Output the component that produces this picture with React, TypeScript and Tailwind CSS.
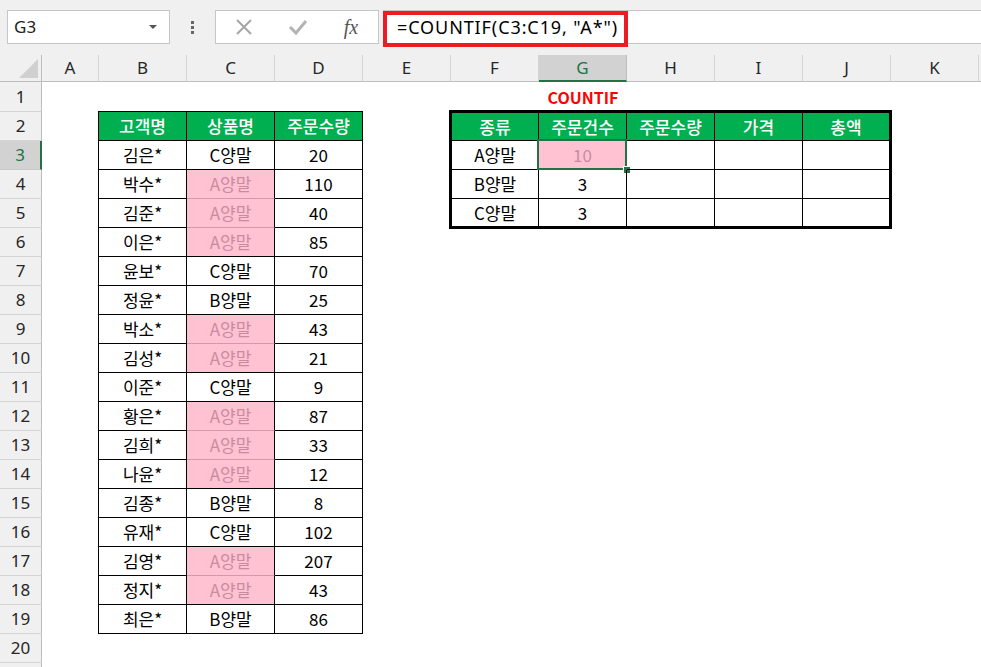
import React from 'react';

interface OrderRow {
    name: string;
    product: string;
    qty: number;
}

const orders: OrderRow[] = [
    { name: '김은*', product: 'C양말', qty: 20 },
    { name: '박수*', product: 'A양말', qty: 110 },
    { name: '김준*', product: 'A양말', qty: 40 },
    { name: '이은*', product: 'A양말', qty: 85 },
    { name: '윤보*', product: 'C양말', qty: 70 },
    { name: '정윤*', product: 'B양말', qty: 25 },
    { name: '박소*', product: 'A양말', qty: 43 },
    { name: '김성*', product: 'A양말', qty: 21 },
    { name: '이준*', product: 'C양말', qty: 9 },
    { name: '황은*', product: 'A양말', qty: 87 },
    { name: '김희*', product: 'A양말', qty: 33 },
    { name: '나윤*', product: 'A양말', qty: 12 },
    { name: '김종*', product: 'B양말', qty: 8 },
    { name: '유재*', product: 'C양말', qty: 102 },
    { name: '김영*', product: 'A양말', qty: 207 },
    { name: '정지*', product: 'A양말', qty: 43 },
    { name: '최은*', product: 'B양말', qty: 86 },
];

// L is only a sliver at the right edge, so its letter stays hidden
const columns = ['A', 'B', 'C', 'D', 'E', 'F', 'G', 'H', 'I', 'J', 'K', ''];
const rowNumbers = Array.from({ length: 21 }, (_, i) => i + 1);

const cellFont = "font-['Noto_Sans_CJK_KR','Noto_Sans',sans-serif]";

const Toolbar: React.FC = () => (
    <div className="h-[55px] bg-[#f0f0f0] flex items-start pt-[10px]">
        {/* name box */}
        <div className="ml-[7px] w-[163px] h-[34px] bg-white border border-[#c6c6c6] flex items-center pl-[6px] pr-[12px]">
            <span className="flex-1 text-[17px] text-[#222] font-['Noto_Sans',sans-serif]">G3</span>
            <span className="w-0 h-0 border-l-[4px] border-r-[4px] border-t-[4px] border-l-transparent border-r-transparent border-t-[#555]" />
        </div>
        <div className="w-[45px] h-[34px] flex flex-col items-center justify-center gap-[2px]">
            <span className="w-[3px] h-[3px] bg-[#666]" />
            <span className="w-[3px] h-[3px] bg-[#666]" />
            <span className="w-[3px] h-[3px] bg-[#666]" />
        </div>
        {/* cancel / enter / fx */}
        <div className="w-[164px] h-[34px] bg-white border border-[#c6c6c6] flex items-center">
            <div className="w-[54px] flex justify-center pl-[2px]">
                <svg width="18" height="18" viewBox="0 0 18 18">
                    <path d="M2 2 L16 16 M16 2 L2 16" stroke="#a6a6a6" strokeWidth="2" fill="none" />
                </svg>
            </div>
            <div className="w-[54px] flex justify-center pl-[2px]">
                <svg width="20" height="16" viewBox="0 0 20 16">
                    <path d="M2 8 L8 14 L18 2" stroke="#b3b3b3" strokeWidth="3" fill="none" />
                </svg>
            </div>
            <div className="w-[54px] flex justify-center">
                <span className="italic text-[20px] text-[#555] font-['Liberation_Serif',serif] leading-none">fx</span>
            </div>
        </div>
        {/* formula input */}
        <div className="ml-[4px] flex-1 h-[34px] bg-white border-y border-l border-[#c6c6c6] relative flex items-center pl-[13px]">
            <span className="text-[18px] tracking-[0.9px] text-black font-['Noto_Sans',sans-serif]">=COUNTIF(C3:C19, "A*")</span>
            <div className="absolute left-[-1px] top-[0px] w-[245px] h-[36px] border-[4px] border-[#ed1c24]" />
        </div>
    </div>
);

const SalesTable: React.FC = () => (
    <div className={`col-start-3 col-end-6 row-start-3 row-end-21 -ml-px -mt-px border-l border-t border-black grid grid-cols-3 grid-rows-[repeat(18,1fr)] ${cellFont}`}>
        {['고객명', '상품명', '주문수량'].map((h) => (
            <div key={h} className="bg-[#00b050] text-white font-medium text-[17px] flex items-center justify-center border-r border-b border-black">
                {h}
            </div>
        ))}
        {orders.map((o, i) => {
            const pink = o.product === 'A양말';
            const nextPink = orders[i + 1]?.product === 'A양말';
            return (
                <React.Fragment key={i}>
                    <div className="text-[17px] text-black flex items-center justify-center border-r border-b border-black">
                        {o.name}
                    </div>
                    <div
                        className={
                            pink
                                ? `text-[17px] text-[#c98c9f] bg-[#ffc2d3] flex items-center justify-center border-r border-b border-r-black ${nextPink ? 'border-b-[#d796aa]' : 'border-b-black'}`
                                : 'text-[17px] text-black flex items-center justify-center border-r border-b border-black'
                        }
                    >
                        {o.product}
                    </div>
                    <div className="text-[17px] text-black flex items-center justify-center border-r border-b border-black">
                        {o.qty}
                    </div>
                </React.Fragment>
            );
        })}
    </div>
);

const SummaryTable: React.FC = () => {
    const heads = ['종류', '주문건수', '주문수량', '가격', '총액'];
    const rows = [
        ['A양말', '10'],
        ['B양말', '3'],
        ['C양말', '3'],
    ];
    return (
        <div className={`col-start-7 col-end-12 row-start-3 row-end-7 -ml-[2px] -mt-[2px] -mr-px -mb-px border-[3px] border-black grid grid-cols-[87px_88px_88px_88px_1fr] grid-rows-[28px_29px_29px_1fr] ${cellFont}`}>
            {heads.map((h, i) => (
                <div
                    key={h}
                    className={`bg-[#00b050] text-white font-medium text-[17px] flex items-center justify-center border-b border-black ${i < 4 ? 'border-r' : ''}`}
                >
                    {h}
                </div>
            ))}
            {rows.map((r, ri) => (
                <React.Fragment key={ri}>
                    {[0, 1, 2, 3, 4].map((ci) => {
                        const selected = ri === 0 && ci === 1;
                        const borders = `${ci < 4 ? 'border-r' : ''} ${ri < 2 ? 'border-b' : ''} border-black`;
                        return (
                            <div
                                key={ci}
                                className={`relative text-[17px] flex items-center justify-center ${borders} ${selected ? 'bg-[#ffc2d3] text-[#c98c9f]' : 'text-black'}`}
                            >
                                {r[ci] ?? ''}
                                {selected && (
                                    <>
                                        <div className="absolute -left-[2px] -top-[2px] -right-px -bottom-px border-2 border-[#217346]" />
                                        <div className="absolute -right-[4px] -bottom-[4px] w-[7px] h-[7px] bg-[#217346] border-l border-t border-white" />
                                    </>
                                )}
                            </div>
                        );
                    })}
                </React.Fragment>
            ))}
        </div>
    );
};

const App: React.FC = () => {
    return (
        <div className="w-[981px] h-[667px] overflow-hidden bg-white">
            <Toolbar />
            <div className="grid grid-cols-[42px_57px_repeat(11,88px)_1fr] grid-rows-[27px_30px_repeat(20,29px)] font-['Noto_Sans',sans-serif]">
                {/* corner */}
                <div className="col-start-1 row-start-1 bg-[#f0f0f0] border-r border-b border-[#bdbdbd] flex items-end justify-end pr-[3px] pb-[3px]">
                    <svg width="19" height="19" viewBox="0 0 19 19">
                        <path d="M19 0 L19 19 L0 19 Z" fill="#d0d0d0" />
                    </svg>
                </div>
                {columns.map((c, i) => {
                    const sel = c === 'G';
                    return (
                        <div
                            key={i}
                            className={`row-start-1 flex items-center justify-center text-[17px] ${sel ? 'bg-[#d2d2d2] text-[#217346] border-b-2 border-b-[#217346] border-r border-r-[#bdbdbd]' : 'bg-[#f0f0f0] text-[#262626] border-r border-r-[#d4d4d4] border-b border-b-[#bdbdbd]'}`}
                            style={{ gridColumnStart: i + 2 }}
                        >
                            {c}
                        </div>
                    );
                })}
                {rowNumbers.map((n) => {
                    const sel = n === 3;
                    return (
                        <div
                            key={n}
                            className={`col-start-1 flex items-center justify-center text-[17px] ${sel ? 'bg-[#d2d2d2] text-[#217346] border-r-2 border-r-[#217346] border-b border-b-[#c8c8c8]' : 'bg-[#f0f0f0] text-[#262626] border-r border-r-[#bdbdbd] border-b border-b-[#d4d4d4]'}`}
                            style={{ gridRowStart: n + 1 }}
                        >
                            {n < 21 ? n : ''}
                        </div>
                    );
                })}
                <div className={`col-start-8 row-start-2 flex items-center justify-center text-[16px] font-bold text-[#ff0000] ${cellFont}`}>
                    COUNTIF
                </div>
                <SalesTable />
                <SummaryTable />
            </div>
        </div>
    );
};

export default App;
